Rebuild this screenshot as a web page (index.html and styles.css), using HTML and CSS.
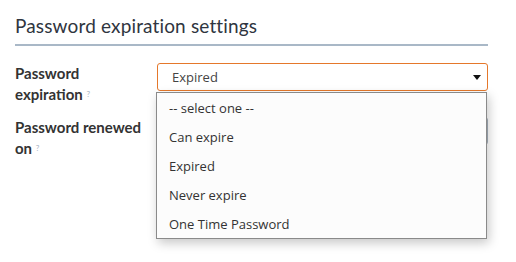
FILE: index.html
```html
<!DOCTYPE html>
<html lang="en">
<head>
<meta charset="utf-8">
<title>Password expiration settings</title>
<link rel="stylesheet" href="styles.css">
</head>
<body>
<div class="settings">
	<h2 class="settings-title">Password expiration settings</h2>

	<div class="form-row">
		<label class="form-label">Password expiration <sup class="hint">?</sup></label>
		<div class="form-control">
			<div class="select is-open">
				<span class="select-value">Expired</span>
				<span class="select-arrow"></span>
			</div>
			<ul class="select-list">
				<li>-- select one --</li>
				<li>Can expire</li>
				<li>Expired</li>
				<li>Never expire</li>
				<li>One Time Password</li>
			</ul>
		</div>
	</div>

	<div class="form-row">
		<label class="form-label">Password renewed on <sup class="hint">?</sup></label>
		<div class="form-control">
			<div class="input"></div>
		</div>
	</div>
</div>
</body>
</html>
```

FILE: styles.css
```css
* {
	margin: 0;
	padding: 0;
	box-sizing: border-box;
}
html, body {
	height: 100%;
	min-height: 262px;
}
body {
	background: #fff;
	font-family: "Lato", "Open Sans", sans-serif;
	color: #333;
}
ul, li {
	list-style: none;
}
.settings {
	padding: 14px 28px 0 15px;
}
.settings-title {
	font-size: 19px;
	font-weight: normal;
	letter-spacing: 0.15px;
	line-height: 23px;
	color: #2f3540;
	padding-bottom: 7px;
	border-bottom: 2px solid #a9b8c7;
}
/* rows */
.form-row {
	display: grid;
	grid-template-columns: 142px 1fr;
	margin-top: 12px;
}
.settings-title + .form-row {
	margin-top: 17px;
}
.form-label {
	font-size: 15px;
	font-weight: bold;
	line-height: 21px;
	color: #333;
	padding-right: 10px;
}
.form-label + .form-control {
	padding-top: 0;
}
.hint {
	font-size: 8px;
	line-height: 0;
	font-weight: normal;
	color: #aab4bf;
	vertical-align: 3px;
}
.form-control {
	position: relative;
}
/* select */
.select {
	display: flex;
	align-items: center;
	justify-content: space-between;
	height: 28px;
	padding: 0 6px 0 14px;
	border: 1px solid #a6b1bd;
	border-radius: 3px;
	background: #fff;
	font-family: "Open Sans", sans-serif;
	font-size: 13px;
	color: #444;
}
.select.is-open {
	border-color: #e5782b;
}
.select-arrow {
	width: 0;
	height: 0;
	border-left: 4.5px solid transparent;
	border-right: 4.5px solid transparent;
	border-top: 5px solid #111;
}
.select-list {
	position: absolute;
	top: 29px;
	left: -1px;
	right: 1px;
	z-index: 2;
	background: #fcfcfc;
	border: 1px solid #8a8a8a;
	box-shadow: 2px 4px 10px rgba(0, 0, 0, 0.22);
	font-family: "Open Sans", sans-serif;
	font-size: 13px;
	color: #333;
}
.select-list li {
	height: 29px;
	line-height: 31px;
	padding-left: 12px;
}
/* input */
.input {
	height: 28px;
	border: 1px solid #a6b1bd;
	border-radius: 3px;
	background: #fff;
}
```
